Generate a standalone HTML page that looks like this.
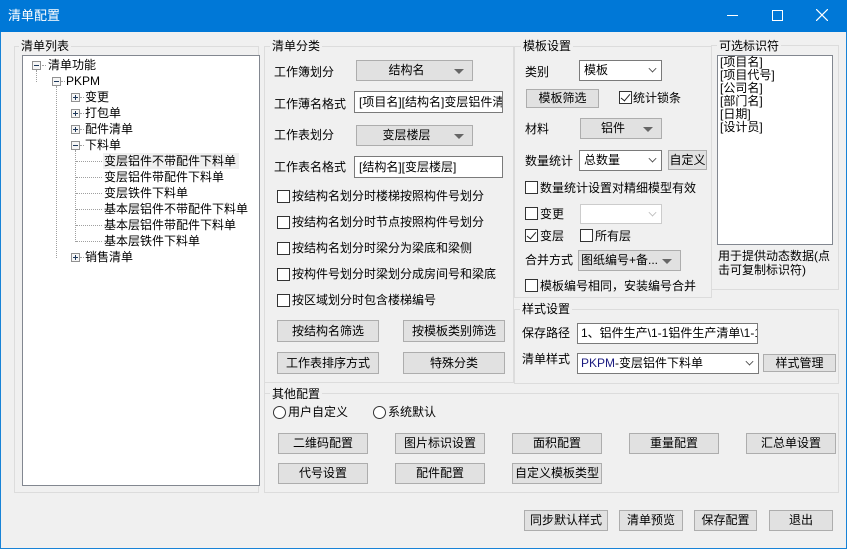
<!DOCTYPE html>
<html><head><meta charset="utf-8"><style>
*{box-sizing:border-box;margin:0;padding:0}
body{width:847px;height:549px;background:#f0f0f0;font-family:"Liberation Sans","Noto Sans CJK SC","WenQuanYi Zen Hei",sans-serif;font-size:12px;color:#000;position:relative;overflow:hidden}
.a{position:absolute;white-space:nowrap}
.t{position:absolute;white-space:nowrap;line-height:16px;height:16px}
.frame{position:absolute;border:1px solid #dcdcdc}
.lbl{position:absolute;background:#f0f0f0;padding:0 2px;line-height:14px;white-space:nowrap}
.btn{position:absolute;background:#e1e1e1;border:1px solid #adadad;text-align:center;white-space:nowrap}
.inp{position:absolute;background:#fff;border:1px solid #7a7a7a;white-space:nowrap;overflow:hidden;padding-left:4px}
.gcombo{position:absolute;background:#e1e1e1;border:1px solid #adadad;text-align:center;padding-right:16px;white-space:nowrap;overflow:hidden}
.gcombo:after{content:"";position:absolute;right:8px;top:50%;margin-top:-2px;border-left:5px solid transparent;border-right:5px solid transparent;border-top:5px solid #666}
.wcombo{position:absolute;background:#fff;border:1px solid #7a7a7a;padding-left:4px;white-space:nowrap}
.chev{position:absolute;right:5px;top:4px;width:7px;height:7px;border-right:1px solid #444;border-bottom:1px solid #444;transform:rotate(45deg) scale(.8)}
.cb{position:absolute;width:13px;height:13px;border:1px solid #333;background:#fff}
.cb.on:after{content:"";position:absolute;left:3px;top:0px;width:4px;height:8px;border-right:1.5px solid #222;border-bottom:1.5px solid #222;transform:rotate(40deg)}
.rb{position:absolute;width:13px;height:13px;border:1px solid #333;border-radius:50%;background:#fff}
.ex{position:absolute;width:9px;height:9px;border:1px solid #919191;background:#f6f6f6}
.ex:before{content:"";position:absolute;left:1px;top:3px;width:5px;height:1px;background:#1e395b}
.ex.p:after{content:"";position:absolute;left:3px;top:1px;width:1px;height:5px;background:#1e395b}
.dv{position:absolute;border-left:1px dotted #a0a0a0;width:0}
.dh{position:absolute;border-top:1px dotted #a0a0a0;height:0}
</style></head><body>
<div class="a" style="left:0;top:0;width:847px;height:549px;border:1px solid #1883d7"></div>
<div class="a" style="left:0;top:0;width:847px;height:32px;background:#0078d7"></div>
<div class="t" style="left:8px;top:8px;color:#fff;font-size:13px">清单配置</div>
<div class="a" style="left:727px;top:15px;width:11px;height:1px;background:#fff"></div>
<div class="a" style="left:772px;top:10px;width:11px;height:11px;border:1px solid #fff"></div>
<svg class="a" style="left:816px;top:9px" width="12" height="12"><path d="M0 0L12 12M12 0L0 12" stroke="#fff" stroke-width="1.2"/></svg>

<div class="frame" style="left:14px;top:46px;width:245px;height:447px"></div>
<div class="lbl" style="left:19px;top:39px">清单列表</div>
<div class="a" style="left:22px;top:55px;width:238px;height:431px;background:#fff;border:1px solid #828790"></div>
<div class="dv" style="left:36px;top:70px;height:12px"></div>
<div class="dv" style="left:56px;top:86px;height:172px"></div>
<div class="dv" style="left:75px;top:150px;height:92px"></div>
<div class="dh" style="left:42px;top:65px;width:4px"></div>
<div class="dh" style="left:61px;top:81px;width:4px"></div>
<div class="dh" style="left:80px;top:97px;width:4px"></div>
<div class="dh" style="left:80px;top:113px;width:4px"></div>
<div class="dh" style="left:80px;top:129px;width:4px"></div>
<div class="dh" style="left:80px;top:145px;width:4px"></div>
<div class="dh" style="left:80px;top:257px;width:4px"></div>
<div class="dh" style="left:76px;top:161px;width:26px"></div>
<div class="dh" style="left:76px;top:177px;width:26px"></div>
<div class="dh" style="left:76px;top:193px;width:26px"></div>
<div class="dh" style="left:76px;top:209px;width:26px"></div>
<div class="dh" style="left:76px;top:225px;width:26px"></div>
<div class="dh" style="left:76px;top:241px;width:26px"></div>
<div class="ex" style="left:32px;top:61px"></div>
<div class="ex" style="left:52px;top:77px"></div>
<div class="ex p" style="left:71px;top:93px"></div>
<div class="ex p" style="left:71px;top:109px"></div>
<div class="ex p" style="left:71px;top:125px"></div>
<div class="ex" style="left:71px;top:141px"></div>
<div class="ex p" style="left:71px;top:253px"></div>
<div class="t" style="left:48px;top:57px">清单功能</div>
<div class="t" style="left:66px;top:73px">PKPM</div>
<div class="t" style="left:85px;top:89px">变更</div>
<div class="t" style="left:85px;top:105px">打包单</div>
<div class="t" style="left:85px;top:121px">配件清单</div>
<div class="t" style="left:85px;top:137px">下料单</div>
<div class="a" style="left:103px;top:153px;width:136px;height:16px;background:#f0f0f0"></div>
<div class="t" style="left:104px;top:153px">变层铝件不带配件下料单</div>
<div class="t" style="left:104px;top:169px">变层铝件带配件下料单</div>
<div class="t" style="left:104px;top:185px">变层铁件下料单</div>
<div class="t" style="left:104px;top:201px">基本层铝件不带配件下料单</div>
<div class="t" style="left:104px;top:217px">基本层铝件带配件下料单</div>
<div class="t" style="left:104px;top:233px">基本层铁件下料单</div>
<div class="t" style="left:85px;top:249px">销售清单</div>

<div class="frame" style="left:264px;top:46px;width:250px;height:337px"></div>
<div class="lbl" style="left:270px;top:39px">清单分类</div>
<div class="t" style="left:274px;top:64px">工作簿划分</div>
<div class="gcombo" style="left:356px;top:60px;width:117px;height:21px;line-height:19px">结构名</div>
<div class="t" style="left:274px;top:96px">工作薄名格式</div>
<div class="inp" style="left:354px;top:91px;width:149px;height:22px;line-height:20px;padding-left:4px">[项目名][结构名]变层铝件清</div>
<div class="t" style="left:274px;top:127px">工作表划分</div>
<div class="gcombo" style="left:356px;top:125px;width:117px;height:21px;line-height:19px">变层楼层</div>
<div class="t" style="left:274px;top:159px">工作表名格式</div>
<div class="inp" style="left:354px;top:156px;width:149px;height:22px;line-height:20px">[结构名][变层楼层]</div>
<div class="cb" style="left:277px;top:190px"></div><div class="t" style="left:292px;top:188px">按结构名划分时楼梯按照构件号划分</div>
<div class="cb" style="left:277px;top:216px"></div><div class="t" style="left:292px;top:214px">按结构名划分时节点按照构件号划分</div>
<div class="cb" style="left:277px;top:242px"></div><div class="t" style="left:292px;top:240px">按结构名划分时梁分为梁底和梁侧</div>
<div class="cb" style="left:277px;top:268px"></div><div class="t" style="left:292px;top:266px">按构件号划分时梁划分成房间号和梁底</div>
<div class="cb" style="left:277px;top:294px"></div><div class="t" style="left:292px;top:292px">按区域划分时包含楼梯编号</div>
<div class="btn" style="left:277px;top:320px;width:102px;height:22px;line-height:20px">按结构名筛选</div>
<div class="btn" style="left:403px;top:320px;width:102px;height:22px;line-height:20px">按模板类别筛选</div>
<div class="btn" style="left:277px;top:352px;width:102px;height:22px;line-height:20px">工作表排序方式</div>
<div class="btn" style="left:403px;top:352px;width:102px;height:22px;line-height:20px">特殊分类</div>

<div class="frame" style="left:514px;top:46px;width:198px;height:252px"></div>
<div class="lbl" style="left:521px;top:39px">模板设置</div>
<div class="t" style="left:525px;top:64px">类别</div>
<div class="wcombo" style="left:579px;top:60px;width:83px;height:21px;line-height:19px">模板<div class="chev"></div></div>
<div class="btn" style="left:526px;top:89px;width:73px;height:19px;line-height:17px">模板筛选</div>
<div class="cb on" style="left:619px;top:91px"></div><div class="t" style="left:633px;top:90px">统计锁条</div>
<div class="t" style="left:525px;top:121px">材料</div>
<div class="gcombo" style="left:580px;top:118px;width:82px;height:21px;line-height:19px">铝件</div>
<div class="t" style="left:525px;top:153px">数量统计</div>
<div class="wcombo" style="left:579px;top:150px;width:83px;height:21px;line-height:19px">总数量<div class="chev"></div></div>
<div class="btn" style="left:668px;top:150px;width:39px;height:20px;line-height:18px">自定义</div>
<div class="cb" style="left:525px;top:181px"></div><div class="t" style="left:540px;top:180px">数量统计设置对精细模型有效</div>
<div class="cb" style="left:525px;top:207px"></div><div class="t" style="left:540px;top:206px">变更</div>
<div class="wcombo" style="left:580px;top:204px;width:82px;height:20px;border-color:#ccc"><div class="chev" style="border-color:#bbb"></div></div>
<div class="cb on" style="left:525px;top:229px"></div><div class="t" style="left:540px;top:228px">变层</div>
<div class="cb" style="left:580px;top:229px"></div><div class="t" style="left:595px;top:228px">所有层</div>
<div class="t" style="left:525px;top:252px">合并方式</div>
<div class="gcombo" style="left:578px;top:250px;width:103px;height:21px;line-height:19px;text-align:left;padding-left:2px">图纸编号+备...</div>
<div class="cb" style="left:525px;top:279px"></div><div class="t" style="left:540px;top:278px">模板编号相同，安装编号合并</div>

<div class="frame" style="left:711px;top:45px;width:128px;height:245px"></div>
<div class="lbl" style="left:717px;top:39px">可选标识符</div>
<div class="a" style="left:717px;top:55px;width:116px;height:190px;background:#fff;border:1px solid #828790"></div>
<div class="a" style="left:720px;top:56px;line-height:13px">[项目名]<br>[项目代号]<br>[公司名]<br>[部门名]<br>[日期]<br>[设计员]</div>
<div class="a" style="left:718px;top:250px;line-height:13.5px">用于提供动态数据(点<br>击可复制标识符)</div>

<div class="frame" style="left:514px;top:309px;width:325px;height:75px"></div>
<div class="lbl" style="left:520px;top:302px">样式设置</div>
<div class="t" style="left:522px;top:325px">保存路径</div>
<div class="inp" style="left:577px;top:323px;width:181px;height:21px;line-height:19px;padding-left:3px">1、铝件生产\1-1铝件生产清单\1-1</div>
<div class="t" style="left:522px;top:351px">清单样式</div>
<div class="wcombo" style="left:577px;top:353px;width:182px;height:21px;line-height:19px;padding-left:3px"><span style="color:#1a1a80">PKPM</span>-变层铝件下料单<div class="chev"></div></div>
<div class="btn" style="left:763px;top:354px;width:73px;height:18px;line-height:16px">样式管理</div>

<div class="frame" style="left:264px;top:393px;width:575px;height:100px"></div>
<div class="a" style="left:264px;top:383px;width:1px;height:12px;background:#dcdcdc"></div>
<div class="lbl" style="left:270px;top:387px">其他配置</div>
<div class="rb" style="left:273px;top:406px"></div><div class="t" style="left:288px;top:404px">用户自定义</div>
<div class="rb" style="left:373px;top:406px"></div><div class="t" style="left:388px;top:404px">系统默认</div>
<div class="btn" style="left:278px;top:433px;width:90px;height:21px;line-height:19px">二维码配置</div>
<div class="btn" style="left:395px;top:433px;width:90px;height:21px;line-height:19px">图片标识设置</div>
<div class="btn" style="left:512px;top:433px;width:90px;height:21px;line-height:19px">面积配置</div>
<div class="btn" style="left:629px;top:433px;width:90px;height:21px;line-height:19px">重量配置</div>
<div class="btn" style="left:746px;top:433px;width:90px;height:21px;line-height:19px">汇总单设置</div>
<div class="btn" style="left:278px;top:463px;width:90px;height:21px;line-height:19px">代号设置</div>
<div class="btn" style="left:395px;top:463px;width:90px;height:21px;line-height:19px">配件配置</div>
<div class="btn" style="left:512px;top:463px;width:90px;height:21px;line-height:19px">自定义模板类型</div>

<div class="btn" style="left:524px;top:510px;width:84px;height:21px;line-height:19px">同步默认样式</div>
<div class="btn" style="left:619px;top:510px;width:64px;height:21px;line-height:19px">清单预览</div>
<div class="btn" style="left:694px;top:510px;width:63px;height:21px;line-height:19px">保存配置</div>
<div class="btn" style="left:769px;top:510px;width:64px;height:21px;line-height:19px">退出</div>
</body></html>
